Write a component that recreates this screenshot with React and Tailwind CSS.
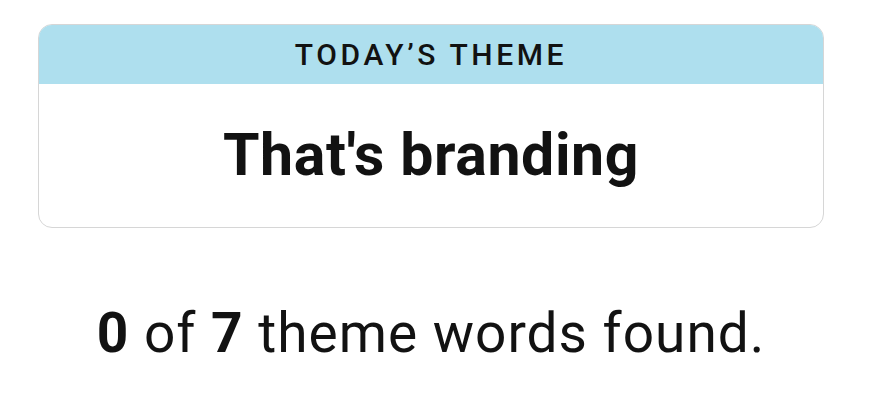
export default function App() {
  return (
    <div className="w-[872px] h-[408px] bg-white pt-[24px] pl-[38px]" style={{ fontFamily: 'Roboto, "Liberation Sans", sans-serif' }}>
      <div className="w-[786px] rounded-[14px] border border-[#d6d6d6] overflow-hidden">
        <div className="h-[59px] bg-[#aedfee] flex items-center justify-center text-[30px] font-medium text-[#121212] tracking-[3.6px]">
          TODAY’S THEME
        </div>
        <div className="h-[143px] flex items-center justify-center text-[59px] font-bold text-[#121212] tracking-[0.6px]">
          That's branding
        </div>
      </div>
      <div className="w-[786px] mt-[78px] flex justify-center text-[55px] text-[#121212] leading-none tracking-[1px]">
        <span><b>0</b> of <b>7</b> theme words found.</span>
      </div>
    </div>
  );
}
